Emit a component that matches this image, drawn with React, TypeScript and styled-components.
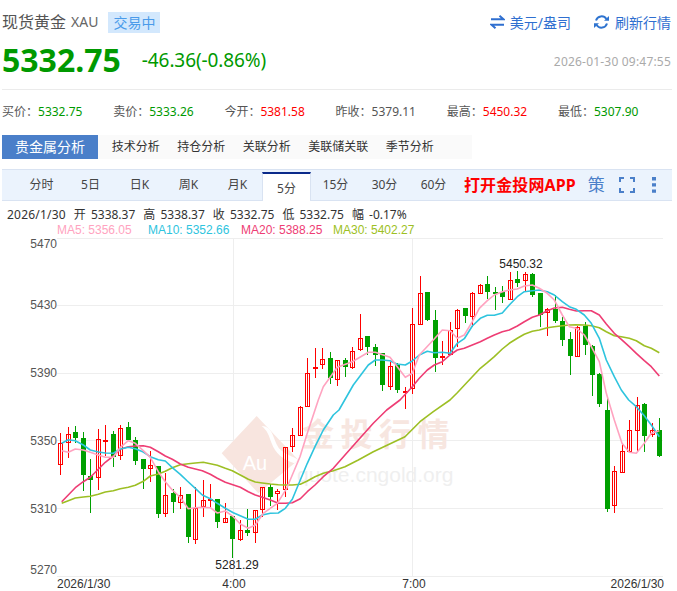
import React from 'react';
import styled, { createGlobalStyle } from 'styled-components';

const Global = createGlobalStyle`
  html, body { margin: 0; padding: 0; background: #fff; }
  body { font-family: "Noto Sans", "Noto Sans CJK SC", "Liberation Sans", sans-serif; }
`;

const Page = styled.div`
  width: 677px;
  height: 591px;
  overflow: hidden;
  background: #fff;
  display: flex;
  flex-direction: column;
  padding-left: 2px;
  box-sizing: border-box;
`;
const TitleRow = styled.div`
  display: flex;
  align-items: center;
  height: 22px;
  margin-top: 11px;
  padding-right: 6px;
`;
const Title = styled.span`
  font-size: 16px;
  color: #555;
  line-height: 22px;
`;
const Code = styled.span`
  font-size: 14px;
  color: #666;
  margin-left: 5px;
  line-height: 22px;
`;
const Badge = styled.span`
  font-size: 14px;
  line-height: 21px;
  height: 21px;
  padding: 0 5px;
  margin-left: 10px;
  background: #d3e8fd;
  color: #4a9bea;
`;
const Actions = styled.div`
  display: flex;
  align-items: center;
  gap: 22px;
  margin-left: auto;
`;
const ActionLink = styled.span`
  display: flex;
  align-items: center;
  gap: 5px;
  font-size: 14px;
  color: #2f6fd0;
`;
const PriceRow = styled.div`
  display: flex;
  align-items: center;
  height: 40px;
  margin-top: 7px;
  padding-right: 6px;
`;
const Price = styled.span`
  font-family: "Noto Sans", sans-serif;
  font-size: 32px;
  font-weight: 700;
  color: #009900;
  line-height: 40px;
`;
const Change = styled.span`
  font-size: 19px;
  color: #009900;
  margin-left: 21px;
  letter-spacing: -0.1px;
`;
const Clock = styled.span`
  font-size: 12px;
  color: #aaa;
  letter-spacing: 0.2px;
  margin-left: auto;
  padding-top: 2px;
`;
const Divider = styled.div`
  height: 1px;
  width: 670px;
  background: #ebebeb;
  margin-top: 9px;
`;
const Stats = styled.div`
  display: grid;
  grid-template-columns: repeat(6, 111.2px);
  height: 20px;
  margin-top: 12px;
`;
const Stat = styled.div`
  font-size: 12px;
  line-height: 20px;
  color: #555;
  white-space: nowrap;
`;
const StatValue = styled.span<{ $c: string }>`
  color: ${p => p.$c};
`;
const AnalysisTabs = styled.div`
  display: flex;
  align-items: center;
  width: 470px;
  height: 24px;
  margin-top: 13px;
  background: #fafafa;
  font-size: 12px;
  color: #333;
`;
const AnalysisActive = styled.div`
  width: 96px;
  height: 24px;
  line-height: 24px;
  text-align: center;
  background: #4a7fc9;
  color: #fff;
  font-size: 14px;
  margin-right: 5px;
`;
const AnalysisTab = styled.div`
  padding: 0 8.75px;
  line-height: 24px;
  white-space: nowrap;
`;
const PeriodBar = styled.div`
  display: flex;
  align-items: flex-end;
  width: 670px;
  height: 32px;
  margin-top: 10px;
  box-sizing: border-box;
  background: #ebf3fd;
  border-top: 1px solid #d9e3f2;
  border-bottom: 1px solid #d9e3f2;
  padding-left: 15px;
`;
const Period = styled.div<{ $active?: boolean }>`
  width: 49px;
  height: ${p => (p.$active ? '29px' : '30px')};
  line-height: ${p => (p.$active ? '29px' : '30px')};
  box-sizing: border-box;
  text-align: center;
  font-size: 12px;
  color: #444;
  ${p => p.$active && `
    background: #fff;
    border-top: 2px solid #0a2a8a;
    border-left: 1px solid #d9e3f2;
    border-right: 1px solid #d9e3f2;
    margin-bottom: -1px;
  `}
`;
const AppLink = styled.div`
  font-size: 16px;
  font-weight: 700;
  color: #f00;
  line-height: 30px;
  margin-left: 6px;
  white-space: nowrap;
  letter-spacing: 0.1px;
  font-family: "Noto Sans", "Noto Sans CJK SC", sans-serif;
`;
const ToolGlyph = styled.div`
  font-size: 17px;
  color: #4a7fc9;
  line-height: 30px;
  margin-left: 12px;
`;
const ToolIcon = styled.div<{ $ml: number }>`
  display: flex;
  align-items: center;
  height: 30px;
  margin-left: ${p => p.$ml}px;
`;
const InfoLine = styled.div`
  display: flex;
  gap: 8px;
  word-spacing: 2px;
  font-size: 12px;
  color: #333;
  height: 16px;
  line-height: 16px;
  margin-top: 6px;
  padding-left: 5px;
  white-space: nowrap;
`;
const InfoDate = styled.span`
  letter-spacing: 0.2px;
`;
const MaLine = styled.div`
  display: flex;
  font-family: "Liberation Sans", Arial, sans-serif;
  font-size: 12px;
  height: 15px;
  line-height: 15px;
  padding-left: 55px;
  white-space: nowrap;
`;
const MaItem = styled.span<{ $c: string; $w: number }>`
  color: ${p => p.$c};
  width: ${p => p.$w}px;
`;
const ChartSvg = styled.svg`
  display: block;
  flex: none;
  margin-left: -2px;
  width: 677px;
  height: 353px;
`;

type C = [number, number, number, number, 'r' | 'g'];
const seg1: C[] = [
  [98,130,193,224,'r'],[81,103,127,174,'r'],[78,96,114,130,'g'],[95,114,224,272,'g'],[177,228,239,340,'g'],
  [86,118,232,269,'r'],[75,119,121,168,'r'],[93,102,170,201,'g'],[75,85,166,180,'r'],[66,81,119,120,'g'],
  [111,120,183,194,'g'],[177,177,206,268,'g'],[153,196,203,245,'r'],[198,198,342,355,'g'],[220,286,340,352,'r'],
  [268,279,306,340,'g'],[260,286,307,328,'r'],[282,282,410,428,'g'],[260,323,416,431,'r'],[240,301,319,352,'r'],
  [252,298,301,322,'r'],[297,297,366,384,'g'],[310,355,365,368,'r'],[348,348,416,474,'g'],[360,391,418,423,'r'],
  [328,391,398,408,'g'],[330,331,397,430,'r'],[260,262,328,350,'r'],[253,262,290,318,'g'],[268,274,280,330,'r'],
  [142,142,268,290,'r'],[85,106,139,155,'r'],[17,22,106,107,'r'],
];
const seg2: C[] = [
  [354,400,497,497,'r'],[323,382,385,415,'r'],[325,358,373,388,'r'],[335,354,413,432,'g'],[360,361,416,438,'r'],
  [354,360,380,410,'g'],[322,334,380,388,'r'],[222,295,328,333,'r'],[288,288,320,345,'g'],[312,321,345,378,'g'],
  [340,340,434,452,'g'],[365,379,437,450,'r'],[370,372,449,458,'g'],[440,453,455,507,'r'],[204,253,443,462,'r'],
  [108,160,253,255,'r'],[156,156,240,242,'g'],[210,240,353,395,'g'],[303,347,350,375,'r'],[245,271,343,345,'r'],
  [208,211,265,320,'r'],[203,205,228,250,'g'],[155,160,229,260,'r'],[133,136,158,160,'r'],[108,132,156,178,'g'],
  [140,156,161,210,'g'],[138,157,170,190,'g'],[96,121,176,178,'r'],[94,118,129,140,'g'],[96,103,121,155,'r'],
  [98,102,164,172,'g'],[160,160,225,260,'g'],[205,208,217,288,'r'],[165,208,242,250,'g'],[230,244,299,318,'g'],
  [275,298,347,404,'g'],[258,262,347,350,'r'],[245,258,314,345,'g'],[315,317,404,467,'g'],[400,402,493,502,'g'],
];
const seg3: C[] = [
  [-6,30,328,335,'g'],[198,214,316,338,'r'],[130,154,217,218,'r'],[60,91,154,157,'r'],[-8,14,91,157,'r'],
  [10,12,107,155,'g'],[70,91,103,112,'r'],[55,90,167,170,'g'],
];
const candles = [
  ...seg1.map(c => ({ c, base: 400 })),
  ...seg2.map(c => ({ c, base: 240 })),
  ...seg3.map(c => ({ c, base: 400 })),
];

const TOP = 238;
const px = (base: number, v: number) => Math.round(base + v / 3) - TOP;
const map = (xo: number, yo: number, pts: number[][]) => pts.map(([x, y]) => [xo + x / 3, yo + y / 3 - TOP]);
const toPath = (pts: number[][]) => pts.map(p => `${p[0].toFixed(1)},${p[1].toFixed(1)}`).join(' ');

const ma5 = [
  ...map(0, 400, [[185,152],[205,157],[226,147],[250,150],[271,157],[295,165],[316,172],[340,172],[361,142],[385,122],[406,130],[430,152],[451,172],[475,215],[496,245],[517,270],[541,292],[565,326],[586,323],[607,322],[631,323],[652,339],[676,333]]),
  ...map(220, 400, [[40,350],[61,372],[85,385],[106,375],[130,340],[172,310],[200,265],[240,170],[262,100],[295,0]]),
  ...map(220, 240, [[310,440],[352,382],[397,365],[445,337],[466,337],[510,352],[556,412],[577,400],[598,345],[640,300],[667,270],[690,272]]),
  ...map(447, 240, [[31,295],[52,285],[76,245],[97,205],[121,182],[142,165],[166,155],[187,150],[211,147],[232,138],[256,135],[277,145],[301,160],[322,180],[346,225],[367,260],[388,265],[412,285],[433,320],[457,365],[478,460]]),
  ...map(447, 400, [[502,60],[525,130],[547,157],[568,160],[592,130],[613,100],[637,92]]),
];
const ma10 = [
  ...map(0, 400, [[185,130],[205,119],[226,122],[250,135],[271,150],[295,156],[316,159],[340,160],[361,147],[385,142],[406,146],[430,156],[451,170],[475,179],[496,183],[517,203],[541,223],[562,243],[586,265],[607,285],[631,296],[652,310],[676,325]]),
  ...map(220, 400, [[40,338],[85,358],[106,358],[127,345],[151,340],[175,339],[196,325],[217,298],[241,240],[262,190],[285,140],[310,90],[340,45]]),
  ...map(220, 240, [[357,510],[400,435],[445,375],[466,360],[487,360],[510,362],[530,372],[556,375],[577,363],[598,345],[622,334],[643,338],[667,337],[690,340]]),
  ...map(447, 240, [[31,310],[52,296],[76,258],[100,235],[121,226],[142,226],[166,219],[187,195],[211,170],[232,155],[256,152],[277,150],[301,155],[322,165],[346,185],[367,200],[388,208],[412,225],[433,250],[457,295],[478,360],[502,410],[523,450],[545,480]]),
  ...map(447, 400, [[568,20],[590,45],[613,75],[637,110]]),
];
const ma20 = [
  ...map(0, 400, [[185,305],[205,285],[226,263],[250,245],[271,232],[295,208],[316,187],[340,168],[361,148],[385,140],[406,138],[430,137],[451,142],[475,155],[496,168],[517,178],[541,192],[565,202],[586,207],[607,212],[631,223],[652,235],[676,247]]),
  ...map(220, 400, [[61,262],[85,275],[106,285],[127,292],[151,300],[175,310],[196,310],[217,308],[241,296],[262,275],[285,255],[310,230],[340,205]]),
  ...map(220, 400, [[375,165],[415,120],[460,70],[500,30],[540,0]]),
  ...map(220, 240, [[577,440],[598,415],[622,390],[643,375],[667,365],[690,345]]),
  ...map(447, 240, [[31,330],[52,325],[76,315],[100,305],[121,295],[142,285],[166,275],[187,270],[211,258],[232,245],[256,232],[277,225],[301,212],[322,204],[346,202],[367,208],[388,213],[412,212],[433,212],[457,225],[478,252],[502,280],[523,298],[547,320],[568,340],[592,362],[613,380],[637,408]]),
];
const ma30 = [
  ...map(0, 400, [[185,310],[205,302],[226,294],[250,291],[271,289],[295,283],[316,276],[340,272],[361,266],[385,262],[406,256],[430,244],[451,228],[475,222],[496,214],[517,203],[541,194],[565,191],[586,189],[610,187],[631,191],[652,196],[676,205]]),
  ...map(220, 400, [[37,212],[61,225],[85,238],[106,246],[127,249],[151,252],[175,254],[196,255],[217,255],[241,253],[262,243],[285,230],[310,220],[340,212],[375,200],[415,180],[460,155],[555,110],[600,65],[640,35],[690,0]]),
  ...map(447, 240, [[31,458],[52,436],[76,410],[100,385],[121,368],[142,350],[166,327],[187,310],[211,295],[232,283],[256,274],[277,270],[301,263],[322,260],[346,257],[367,255],[388,254],[412,255],[433,257],[457,263],[478,275],[502,287],[523,290],[547,295],[568,302],[592,317],[613,325],[637,338]]),
];

const AXIS = '"Liberation Sans", Arial, sans-serif';
const gridY = [305, 373, 440, 508, 576].map(y => y - TOP + 0.5);
const labelsY: [string, number][] = [['5470', 248], ['5430', 309], ['5390', 377], ['5350', 445], ['5310', 513], ['5270', 574]];

const Chart = () => (
  <ChartSvg viewBox="0 0 677 353">
    <line x1="57" x2="663" y1="0.5" y2="0.5" stroke="#eee" />
    {gridY.map(y => <line key={y} x1="57" x2="663" y1={y} y2={y} stroke="#eee" />)}
    {[233.5, 412.5].map(x => <line key={x} x1={x} x2={x} y1="0" y2={338} stroke="#eee" />)}
    <g transform={`translate(215,${410 - TOP}) scale(0.3333)`}>
      <path d="M20 130 L125 18 L250 150 L130 250 Z" fill="#f8e5df" />
      <path d="M140 48 C178 50 172 92 195 118 C210 134 232 138 250 150 L238 160 C205 150 180 130 170 100 C162 78 158 62 140 48 Z" fill="#fff" />
    </g>
    <text x="255" y={470 - TOP} fontFamily={AXIS} fontSize="20" fill="#fff" textAnchor="middle">Au</text>
    <text x="302" y={446 - TOP} fontFamily='"Noto Sans CJK SC", sans-serif' fontSize="32" fontWeight="700" fill="#f7e6e0" letterSpacing="6.5">金投行情</text>
    <text x="297" y={482 - TOP} fontFamily={AXIS} fontSize="21" fill="#efefef">quote.cngold.org</text>
    {labelsY.map(([t, y]) => (
      <text key={t} x="57" y={y - TOP} fontFamily={AXIS} fontSize="12" fill="#555" textAnchor="end">{t}</text>
    ))}
    {candles.map(({ c, base }, i) => {
      const x = Math.round(60.2 + 7.49 * i) + 0.5;
      const [wt, bt, bb, wb, k] = c;
      const col = k === 'r' ? '#ff0000' : '#00a000';
      const t = px(base, bt);
      const b = px(base, bb);
      return (
        <g key={i}>
          <line x1={x} x2={x} y1={px(base, wt)} y2={px(base, wb)} stroke={col} />
          {k === 'r'
            ? <rect x={x - 2} y={t + 0.5} width={4} height={Math.max(b - t, 1)} fill={b - t > 2 ? 'none' : '#fff'} stroke={col} />
            : <rect x={x - 2.5} y={t} width={5} height={Math.max(b - t, 1)} fill={col} />}
        </g>
      );
    })}
    <polyline points={toPath(ma30)} fill="none" stroke="#9dbf24" strokeWidth="1.6" strokeLinejoin="round" />
    <polyline points={toPath(ma20)} fill="none" stroke="#ee3d74" strokeWidth="1.6" strokeLinejoin="round" />
    <polyline points={toPath(ma10)} fill="none" stroke="#2ec4de" strokeWidth="1.6" strokeLinejoin="round" />
    <polyline points={toPath(ma5)} fill="none" stroke="#ffa3c0" strokeWidth="1.6" strokeLinejoin="round" />
    <text x="521" y={268 - TOP} fontFamily={AXIS} fontSize="12" fill="#222" textAnchor="middle">5450.32</text>
    <text x="237" y={569 - TOP} fontFamily={AXIS} fontSize="12" fill="#222" textAnchor="middle">5281.29</text>
    <text x="57" y={588 - TOP} fontFamily={AXIS} fontSize="12" fill="#333">2026/1/30</text>
    <text x="234" y={588 - TOP} fontFamily={AXIS} fontSize="12" fill="#333" textAnchor="middle">4:00</text>
    <text x="414" y={588 - TOP} fontFamily={AXIS} fontSize="12" fill="#333" textAnchor="middle">7:00</text>
    <text x="664" y={588 - TOP} fontFamily={AXIS} fontSize="12" fill="#333" textAnchor="end">2026/1/30</text>
  </ChartSvg>
);

const SwapIcon = () => (
  <svg width="15" height="14" viewBox="0 0 15 14">
    <path d="M1 4.2H13.5L9.5 0.8" fill="none" stroke="#2f6fd0" strokeWidth="2" />
    <path d="M14 9.8H1.5L5.5 13.2" fill="none" stroke="#2f6fd0" strokeWidth="2" />
  </svg>
);
const RefreshIcon = () => (
  <svg width="17" height="16" viewBox="0 0 17 16">
    <path d="M3 6.5A5.8 5.8 0 0 1 13.4 5" fill="none" stroke="#2f74d0" strokeWidth="2" />
    <path d="M14 9.5A5.8 5.8 0 0 1 3.6 11" fill="none" stroke="#2f74d0" strokeWidth="2" />
    <path d="M11 6.8H16V2Z M6 9.2H1V14Z" fill="#2f74d0" />
  </svg>
);
const FullIcon = () => (
  <svg width="16" height="16" viewBox="0 0 16 16">
    <path d="M1 5V1H5M11 1H15V5M15 11V15H11M5 15H1V11" fill="none" stroke="#4a7fc9" strokeWidth="2" />
  </svg>
);
const MoreIcon = () => (
  <svg width="4" height="16" viewBox="0 0 4 16">
    <path d="M0 0H4V3.4H0Z M0 6.2H4V9.6H0Z M0 12.4H4V15.8H0Z" fill="#4a7fc9" />
  </svg>
);

const stats: [string, string, string][] = [
  ['买价：', '5332.75', '#009900'],
  ['卖价：', '5333.26', '#009900'],
  ['今开：', '5381.58', '#f00'],
  ['昨收：', '5379.11', '#555'],
  ['最高：', '5450.32', '#f00'],
  ['最低：', '5307.90', '#009900'],
];
const periods = ['分时', '5日', '日K', '周K', '月K', '5分', '15分', '30分', '60分'];

export default function App() {
  return (
    <Page>
      <Global />
      <TitleRow>
        <Title>现货黄金</Title>
        <Code>XAU</Code>
        <Badge>交易中</Badge>
        <Actions>
          <ActionLink><SwapIcon />美元/盎司</ActionLink>
          <ActionLink><RefreshIcon />刷新行情</ActionLink>
        </Actions>
      </TitleRow>
      <PriceRow>
        <Price>5332.75</Price>
        <Change>-46.36(-0.86%)</Change>
        <Clock>2026-01-30 09:47:55</Clock>
      </PriceRow>
      <Divider />
      <Stats>
        {stats.map(([l, v, c]) => (
          <Stat key={l}>{l}<StatValue $c={c}>{v}</StatValue></Stat>
        ))}
      </Stats>
      <AnalysisTabs>
        <AnalysisActive>贵金属分析</AnalysisActive>
        {['技术分析', '持仓分析', '关联分析', '美联储关联', '季节分析'].map(t => (
          <AnalysisTab key={t}>{t}</AnalysisTab>
        ))}
      </AnalysisTabs>
      <PeriodBar>
        {periods.map(p => <Period key={p} $active={p === '5分'}>{p}</Period>)}
        <AppLink>打开金投网APP</AppLink>
        <ToolGlyph>策</ToolGlyph>
        <ToolIcon $ml={14}><FullIcon /></ToolIcon>
        <ToolIcon $ml={17}><MoreIcon /></ToolIcon>
      </PeriodBar>
      <InfoLine>
        <InfoDate>2026/1/30</InfoDate>
        <span>开 5338.37</span>
        <span>高 5338.37</span>
        <span>收 5332.75</span>
        <span>低 5332.75</span>
        <span>幅 -0.17%</span>
      </InfoLine>
      <MaLine>
        <MaItem $c="#ffa3c0" $w={91}>MA5: 5356.05</MaItem>
        <MaItem $c="#2ec4de" $w={93}>MA10: 5352.66</MaItem>
        <MaItem $c="#ee3d74" $w={92}>MA20: 5388.25</MaItem>
        <MaItem $c="#9dbf24" $w={90}>MA30: 5402.27</MaItem>
      </MaLine>
      <Chart />
    </Page>
  );
}
